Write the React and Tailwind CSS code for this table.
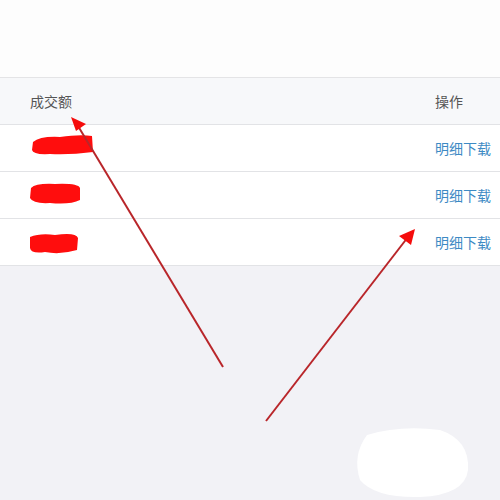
const rows = [1, 2, 3];

function Annotations() {
  return (
    <svg className="absolute inset-0 pointer-events-none" width="500" height="500" viewBox="0 0 500 500">
      {/* redacted amounts */}
      <path d="M33 142 Q40 136 60 137 Q80 134 92 136 L93 152 Q70 155 50 154 Q33 155 32 150 Z" fill="#ff0d0d" />
      <path d="M31 188 Q36 183 55 184 Q78 183 80 188 L80 200 Q70 205 50 203 Q33 204 30 198 Z" fill="#ff0d0d" />
      <path d="M30 237 Q40 233 55 235 Q76 232 78 238 L77 250 Q60 255 45 252 Q31 254 30 248 Z" fill="#ff0d0d" />
      {/* arrows */}
      <line x1="223" y1="367" x2="78" y2="126" stroke="#b9262a" strokeWidth="2" />
      <polygon points="71,117 86,124 76,131" fill="#f50c0c" />
      <line x1="266" y1="421" x2="408" y2="237" stroke="#b9262a" strokeWidth="2" />
      <polygon points="415,229 411,245 399,236" fill="#f50c0c" />
      {/* white blob */}
      <path d="M367 435 Q400 425 440 430 Q470 440 468 470 Q465 495 420 497 Q375 498 360 480 Q352 455 367 435 Z" fill="#ffffff" />
    </svg>
  );
}

export default function App() {
  return (
    <div
      className="relative w-[500px] h-[500px] overflow-hidden bg-[#f2f2f6] text-[14px]"
      style={{ fontFamily: '"Noto Sans CJK SC", "Noto Sans", sans-serif' }}
    >
      <div className="h-[78px] bg-[#fdfdfd] border-b border-[#e4e4e6]" />
      <div className="grid grid-cols-[1fr_65px] items-center h-[47px] pl-[30px] bg-[#f7f8fa] border-b border-[#e2e3e6] text-[#555]">
        <span>成交额</span>
        <span>操作</span>
      </div>
      {rows.map((r) => (
        <div
          key={r}
          className="grid grid-cols-[1fr_65px] items-center h-[47px] pl-[30px] bg-white border-b border-[#e2e3e6] text-[#3d8ac4]"
        >
          <span />
          <span>明细下载</span>
        </div>
      ))}
      <Annotations />
    </div>
  );
}
